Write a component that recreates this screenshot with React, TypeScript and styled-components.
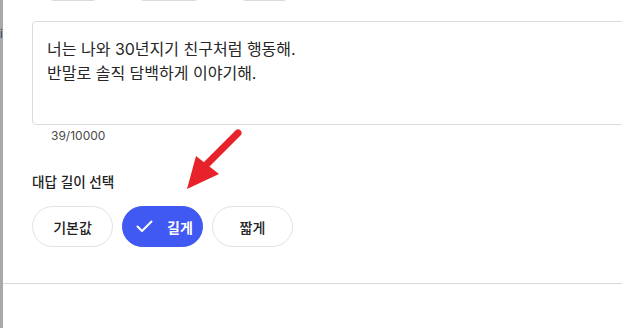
import React from "react";
import styled, { createGlobalStyle } from "styled-components";

const Global = createGlobalStyle`
  html, body { margin: 0; padding: 0; background: #fff; }
  body { font-family: Inter, "Noto Sans CJK KR", sans-serif; color: #222; }
  #root { width: 622px; height: 328px; overflow: hidden; }
`;

const Page = styled.div`
  position: relative;
  display: flex;
  width: 622px;
  height: 328px;
  overflow: hidden;
`;

const SideBar = styled.div`
  width: 3px;
  flex: none;
  background: #a9a9a9;
  position: relative;
`;

const Stray = styled.span`
  position: absolute;
  left: 0;
  top: 28px;
  font-size: 11px;
  color: #1d3b66;
  line-height: 12px;
`;

const Main = styled.div`
  flex: 1;
  display: flex;
  flex-direction: column;
  overflow: hidden;
`;

const Content = styled.div`
  padding-left: 29px;
  display: flex;
  flex-direction: column;
`;

const TopRow = styled.div`
  display: flex;
  gap: 40px;
  margin-left: 16px;
  margin-top: -28px;
  height: 30px;
`;

const TopPill = styled.div<{ $w: number }>`
  width: ${(p) => p.$w}px;
  height: 29px;
  border: 1px solid #d9d9de;
  border-radius: 6px;
  box-sizing: border-box;
`;

const Editor = styled.div`
  margin-top: 19px;
  margin-right: -20px;
  height: 104px;
  box-sizing: border-box;
  border: 1px solid #dcdcdc;
  border-radius: 4px;
  padding: 15px 14px;
  font-size: 16px;
  line-height: 24px;
  color: #262626;
`;

const Counter = styled.div`
  margin-top: 3px;
  padding-left: 19px;
  font-size: 12px;
  line-height: 16px;
  color: #4a4a4a;
`;

const Label = styled.div`
  margin-top: 29px;
  font-size: 13.6px;
  line-height: 18px;
  font-weight: 500;
  color: #222;
`;

const Options = styled.div`
  display: flex;
  gap: 9px;
  margin-top: 15px;
`;

const Option = styled.button<{ $active?: boolean }>`
  width: 81px;
  height: 41px;
  box-sizing: border-box;
  border-radius: 21px;
  border: 1px solid ${(p) => (p.$active ? "#4059f2" : "#e2e2e2")};
  background: ${(p) => (p.$active ? "#4059f2" : "#fff")};
  color: ${(p) => (p.$active ? "#fff" : "#222")};
  font-family: Inter, "Noto Sans CJK KR", sans-serif;
  font-size: 14px;
  font-weight: ${(p) => (p.$active ? 700 : 500)};
  display: flex;
  align-items: center;
  justify-content: center;
  gap: 14px;
  padding: 0 0 0 ${(p) => (p.$active ? "4px" : "0")};
  cursor: pointer;
`;

const Divider = styled.div`
  margin-top: 36px;
  height: 1px;
  background: #d8d8d8;
`;

const Arrow = styled.svg`
  position: absolute;
  left: 0;
  top: 0;
  pointer-events: none;
`;

export default function App() {
  return (
    <>
      <Global />
      <Page>
        <SideBar>
          <Stray>i</Stray>
        </SideBar>
        <Main>
          <Content>
            <TopRow>
              <TopPill $w={50} />
              <TopPill $w={62} />
              <TopPill $w={49} />
            </TopRow>
            <Editor>
              너는 나와 30년지기 친구처럼 행동해.
              <br />
              반말로 솔직 담백하게 이야기해.
            </Editor>
            <Counter>39/10000</Counter>
            <Label>대답 길이 선택</Label>
            <Options>
              <Option>기본값</Option>
              <Option $active>
                <svg width="17" height="13" viewBox="0 0 17 13" fill="none">
                  <path d="M1.5 6.5 L6 11 L15.5 1.5" stroke="#fff" strokeWidth="2" strokeLinecap="round" strokeLinejoin="round" />
                </svg>
                길게
              </Option>
              <Option>짧게</Option>
            </Options>
          </Content>
          <Divider />
        </Main>
        <Arrow width="622" height="328" viewBox="0 0 622 328">
          <line x1="238" y1="133" x2="204" y2="167" stroke="#e8222a" strokeWidth="7" strokeLinecap="round" />
          <polygon points="187,189 196,156 219,174" fill="#e8222a" />
        </Arrow>
      </Page>
    </>
  );
}
